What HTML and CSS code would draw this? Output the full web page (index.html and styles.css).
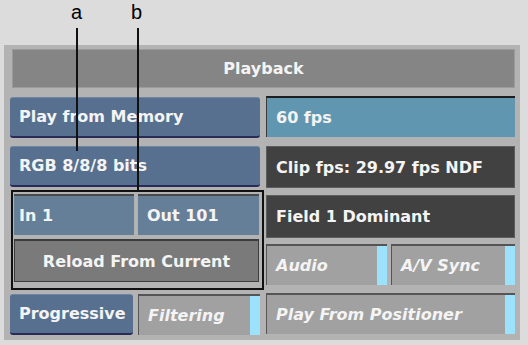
FILE: index.html
```html
<!DOCTYPE html>
<html lang="en">
<head>
    <meta charset="UTF-8">
    <title>Playback</title>
    <link rel="stylesheet" href="styles.css">
</head>
<body>
    <div class="stage">
        <span class="label label-a">a</span>
        <span class="label label-b">b</span>
        <div class="leader leader-a"></div>
        <div class="leader leader-b"></div>

        <div class="panel">
            <div class="title">Playback</div>
            <div class="cols">
                <div class="col col-left">
                    <div class="btn btn-blue r1">Play from Memory</div>
                    <div class="btn btn-blue r2">RGB 8/8/8 bits</div>
                    <div class="group">
                        <div class="pair">
                            <div class="btn btn-steel btn-in">In 1</div>
                            <div class="btn btn-steel btn-out">Out 101</div>
                        </div>
                        <div class="btn btn-gray btn-reload">Reload From Current</div>
                    </div>
                    <div class="pair bottom">
                        <div class="btn btn-blue btn-prog">Progressive</div>
                        <div class="btn toggle btn-filter">Filtering<span class="lamp"></span></div>
                    </div>
                </div>
                <div class="col col-right">
                    <div class="btn btn-teal">60 fps</div>
                    <div class="btn btn-dark btn-clip">Clip fps: 29.97 fps NDF</div>
                    <div class="btn btn-dark btn-field">Field 1 Dominant</div>
                    <div class="pair toggles">
                        <div class="btn toggle btn-audio">Audio<span class="lamp"></span></div>
                        <div class="btn toggle btn-sync">A/V Sync<span class="lamp"></span></div>
                    </div>
                    <div class="btn toggle btn-pos">Play From Positioner<span class="lamp"></span></div>
                </div>
            </div>
        </div>
    </div>
</body>
</html>
```

FILE: styles.css
```css
body {
    margin: 0;
    background-color: #dcdcdc;
    font-family: "DejaVu Sans", Verdana, sans-serif;
    color: #f4f4f4;
}
.stage {
    position: relative;
    width: 528px;
    height: 345px;
    padding: 45px 0 0 4px;
    box-sizing: border-box;
}
.label {
    position: absolute;
    top: 1px;
    font-family: "Liberation Sans", Arial, sans-serif;
    font-size: 20px;
    color: #000;
}
.label-a { left: 71px; }
.label-b { left: 131px; }
.leader {
    position: absolute;
    top: 28px;
    width: 2px;
    background-color: #111;
    z-index: 2;
}
.leader-a { left: 76px; height: 123px; }
.leader-b { left: 137px; height: 164px; }

.panel {
    width: 516px;
    height: 295px;
    background-color: #b3b3b3;
    padding: 4px 5px 0 6px;
    box-sizing: border-box;
}
.title {
    height: 39px;
    margin: 0 0 8px 2px;
    background-color: #858585;
    border: 1px solid #9b9b9b;
    box-sizing: border-box;
    display: flex;
    align-items: center;
    justify-content: center;
    font-weight: bold;
    font-size: 16px;
}
.cols {
    display: flex;
    gap: 6px;
}
.col {
    display: flex;
    flex-direction: column;
}
.col-left { width: 250px; }
.col-right { width: 249px; }

.btn {
    position: relative;
    display: flex;
    align-items: center;
    padding-left: 9px;
    box-sizing: border-box;
    font-weight: bold;
    font-size: 16px;
    white-space: nowrap;
}
.btn-blue {
    height: 41px;
    background-color: #57708f;
    border-top: 1px solid #6e86a3;
    border-bottom: 2px solid #2b2b5a;
    border-radius: 3px;
    padding-bottom: 2px;
}
.r1 { margin-top: 1px; }
.r2 { margin-top: 8px; }

.group {
    margin: 3px -4px 4px 1px;
    border: 2px solid #111;
    padding: 2px 3px 6px 0;
    display: flex;
    flex-direction: column;
    gap: 4px;
}
.pair {
    display: flex;
    gap: 4px;
}
.btn-steel {
    height: 41px;
    background-color: #667f99;
    border-top: 2px solid #4a4a4a;
}
.btn-in {
    width: 120px;
    margin-left: 1px;
    padding-left: 5px;
}
.btn-out { flex: 1; }
.btn-gray {
    height: 43px;
    background-color: #7a7a7a;
    border: 1px solid #3c3c3c;
    border-top-width: 2px;
    justify-content: center;
    padding-left: 0;
    margin-left: 1px;
}
.bottom { gap: 5px; }
.btn-prog {
    width: 123px;
}

.btn-teal {
    height: 41px;
    background-color: #6196b0;
    border-top: 2px solid #1e1e1e;
    border-left: 1px solid #3a3a3a;
}
.btn-dark {
    background-color: #414141;
    border: 1px solid #5d5d5d;
}
.btn-clip { height: 42px; margin-top: 9px; }
.btn-field { height: 43px; margin-top: 7px; }

.toggle {
    height: 41px;
    background-color: #a1a1a1;
    border-top: 2px solid #555;
    border-left: 1px solid #555;
    font-style: italic;
    padding-right: 12px;
}
.lamp {
    position: absolute;
    top: 0;
    right: 0;
    bottom: 0;
    width: 10px;
    background-color: #9de2fd;
}
.btn-filter { flex: 1; }
.toggles { margin-top: 6px; gap: 4px; }
.btn-audio { width: 121px; }
.btn-sync { flex: 1; }
.btn-pos { margin-top: 8px; }
```
